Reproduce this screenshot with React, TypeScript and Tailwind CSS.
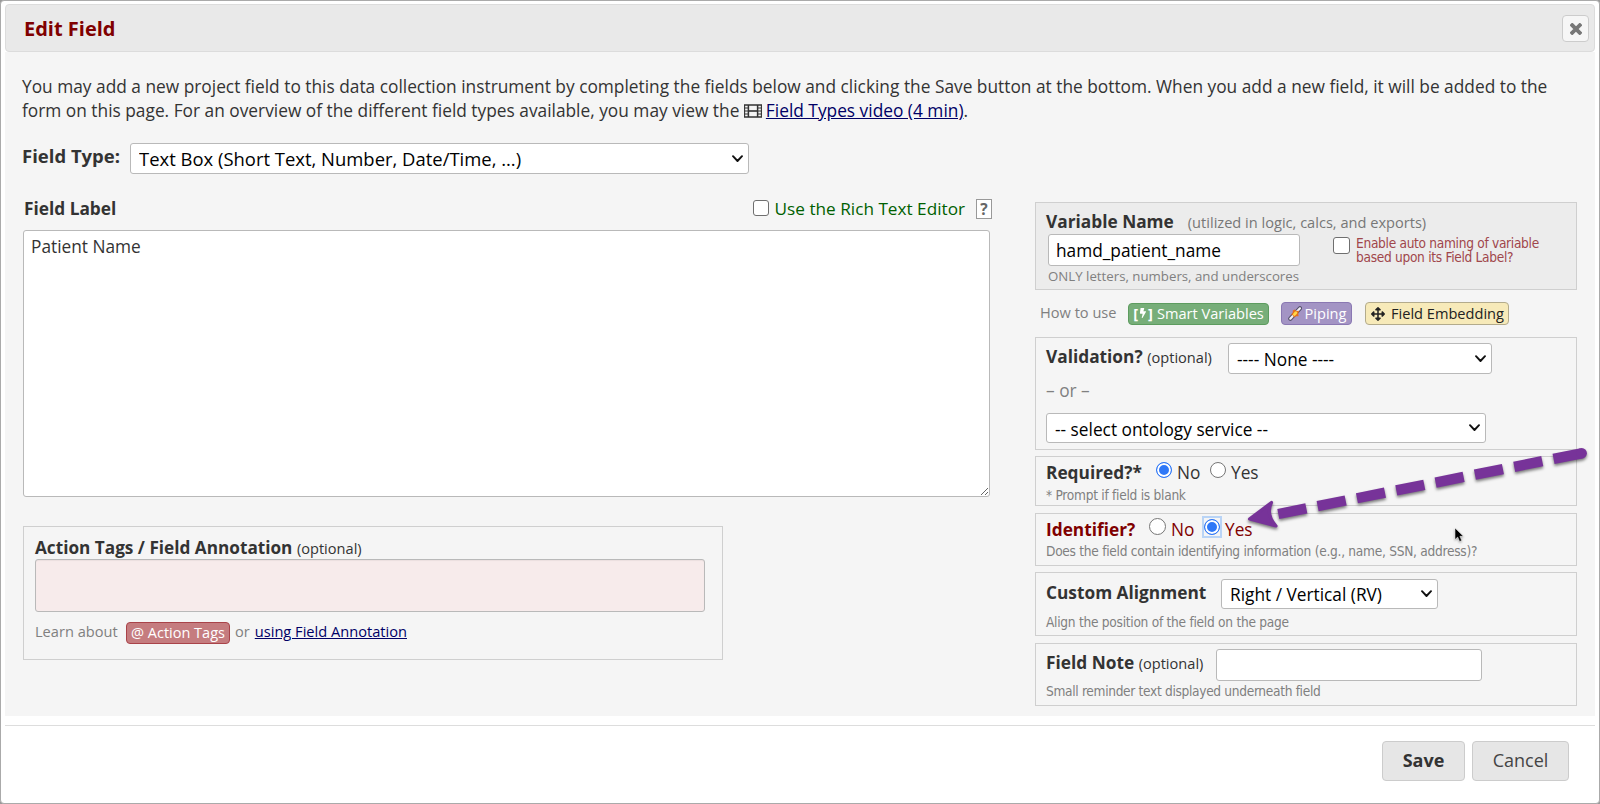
import type { ReactNode } from "react";
import { FaArrowsAlt, FaBolt } from "react-icons/fa";

const control = "border border-[#b9b9b9] rounded-[3px] bg-white text-black outline-none";
const hint = "font-['DejaVu_Sans_Condensed','DejaVu_Sans',sans-serif] text-[13.6px] leading-[14px] tracking-[-0.27px] text-[#808080] whitespace-nowrap";

function Select({ value, className, textClass = "text-[17.3px] pt-[2px]" }: { value: string; className: string; textClass?: string }) {
  return (
    <div className={`relative shrink-0 ${className}`}>
      <select className={`${control} ${textClass} block h-full w-full appearance-none pl-[8px]`} defaultValue={value}>
        <option>{value}</option>
      </select>
      <svg className="pointer-events-none absolute top-1/2 right-[6px] -mt-[4px]" width="11" height="8" viewBox="0 0 11 8" fill="none">
        <path d="M1 1.2 5.5 6 10 1.2" stroke="#111" strokeWidth="1.9" strokeLinecap="round" strokeLinejoin="round" />
      </svg>
    </div>
  );
}

function Checkbox({ className }: { className: string }) {
  return <input type="checkbox" className={`shrink-0 appearance-none rounded-[3px] border border-[#6f6f6f] bg-white ${className}`} />;
}

function Radio({ name, checked = false, className = "" }: { name: string; checked?: boolean; className?: string }) {
  return (
    <input
      type="radio"
      name={name}
      defaultChecked={checked}
      className={`size-[16px] shrink-0 appearance-none rounded-full border border-[#767676] bg-white checked:border-[1.5px] checked:border-[#2f78f7] checked:bg-[#2f78f7] checked:shadow-[inset_0_0_0_2px_#fff] ${className}`}
    />
  );
}

function Panel({ className, children }: { className: string; children: ReactNode }) {
  return <section className={`w-[542px] border border-[#cfcfcf] pl-[10px] ${className}`}>{children}</section>;
}

function FilmIcon() {
  return (
    <svg className="mr-[4px] inline-block align-[-1px]" width="18" height="14" viewBox="0 0 18 14" fill="none" stroke="#333">
      <path d="M0 1H18M0 13H18" strokeWidth="1.5" />
      <path d="M4.4 1V13M13.6 1V13" strokeWidth="1.5" />
      <path d="M.6 1V13M17.4 1V13" strokeWidth="1.1" />
      <path d="M4.4 7H13.6" strokeWidth="1.6" />
      <path d="M0 4H4M0 7H4M0 10H4M14 4H18M14 7H18M14 10H18" strokeWidth="1" />
    </svg>
  );
}

function PipeIcon() {
  return (
    <svg width="14" height="15" viewBox="0 0 14 15" className="shrink-0">
      <path d="M2.3 12.7 12 2.3" stroke="#55506a" strokeWidth="4.2" strokeLinecap="round" />
      <path d="M2.3 12.7 12 2.3" stroke="#f1f1f4" strokeWidth="2.2" strokeLinecap="round" />
      <path d="M6.8 3.4 8.2 5 11 4.8 10.2 7.8 10.6 10.2 8 10.2 5.8 11.6 5 9.4 3.2 8.4 4.8 6.4 4.8 4.4Z" fill="#e56f1c" />
      <path d="M6.4 8.4 7.9 6.7" stroke="#ffd648" strokeWidth="2.8" strokeLinecap="round" />
    </svg>
  );
}

function Arrow() {
  return (
    <svg className="pointer-events-none absolute top-[440px] left-[1230px] drop-shadow-[0_2px_1.5px_rgba(0,0,0,0.5)]" width="366" height="100" viewBox="1230 440 366 100">
      <path d="M1278.3 514 1581.7 453.3" stroke="#773399" strokeWidth="10.4" strokeDasharray="28.6 11.5" fill="none" />
      <circle cx="1581.7" cy="453.3" r="5.2" fill="#773399" />
      <path d="M1249.5 519 1271.5 502.5Q1265.5 514.5 1276 526Z" fill="#773399" stroke="#773399" strokeWidth="3.2" strokeLinejoin="round" />
    </svg>
  );
}

function Cursor() {
  return (
    <svg className="pointer-events-none absolute top-[527px] left-[1454px] drop-shadow-[0_1px_1px_rgba(0,0,0,0.35)]" width="12" height="17" viewBox="0 0 12 17">
      <path d="M1 1V12.6L3.7 10.1 5.6 14.5 7.7 13.6 5.9 9.3H9.4Z" fill="#000" stroke="#fff" strokeWidth=".5" />
    </svg>
  );
}

export default function App() {
  return (
    <div className="relative h-[804px] w-[1600px] bg-[#999] font-['Open_Sans','Noto_Sans',sans-serif] text-[17.3px] leading-[24px] text-[#333]">
      <div className="flex h-full flex-col rounded-[4px] border border-[#aaa] bg-white px-[4px] pt-[3px]">
        <header className="flex h-[48px] shrink-0 items-start justify-between rounded-[4px] border border-[#dcdcdc] bg-[#e9e9e9] pr-[5px] pl-[18px]">
          <h1 className="mt-[11px] text-[20px] leading-[26px] font-bold text-[#800000]">Edit Field</h1>
          <button className="mt-[10px] flex h-[27px] w-[27px] items-center justify-center rounded-[4px] border border-[#ccc] bg-[#f6f6f6] pt-px pl-px">
            <svg width="12" height="12" viewBox="0 0 12 12">
              <path d="M2.2 2.2 9.8 9.8M9.8 2.2 2.2 9.8" stroke="#777" strokeWidth="3.8" strokeLinecap="square" />
            </svg>
          </button>
        </header>

        <main className="h-[664px] shrink-0 bg-[#f5f5f5] px-[17px] pt-[22px]">
          <p className="text-[17.32px] whitespace-nowrap">
            You may add a new project field to this data collection instrument by completing the fields below and clicking the Save button at the bottom. When you add a new field, it will be added to the
            <br />
            form on this page. For an overview of the different field types available, you may view the <FilmIcon />
            <a className="text-[#000066] underline">Field Types video (4 min)</a>.
          </p>

          <div className="mt-[21px] flex h-[31px] items-start">
            <label className="mt-[1px] w-[108px] text-[18.5px] font-bold">Field Type:</label>
            <Select value="Text Box (Short Text, Number, Date/Time, ...)" className="h-[31px] w-[619px]" textClass="text-[18.45px]" />
          </div>

          <div className="flex items-start gap-[45px]">
            <div className="w-[968px] shrink-0 pt-[22px] pl-px">
              <div className="mr-[-2px] flex h-[34px] items-start">
                <label className="mt-px ml-px font-bold">Field Label</label>
                <Checkbox className="mt-[4px] ml-auto size-[16px]" />
                <span className="mt-px ml-[6px] text-[17.2px] text-[#006000]">Use the Rich Text Editor</span>
                <button className="mt-[3px] ml-[11px] flex h-[20px] w-[16px] items-center justify-center border border-[#999] bg-white text-[15.5px] leading-[18px] font-bold text-[#666]">?</button>
              </div>
              <textarea className="block h-[267px] w-[967px] rounded-[3px] border border-[#b9b9b9] bg-white px-[7px] pt-[4px] leading-[24px] outline-none" defaultValue="Patient Name" />

              <section className="mt-[29px] h-[134px] w-[700px] border border-[#cfcfcf] pl-[11px]">
                <div className="flex h-[32px] items-end whitespace-nowrap">
                  <p className="-mb-px text-[17.2px]">
                    <b>Action Tags / Field Annotation</b> <span className="text-[14.6px]">(optional)</span>
                  </p>
                </div>
                <textarea className="block h-[53px] w-[670px] resize-none rounded-[3px] border border-[#b9b9b9] bg-[#f7ebeb] shadow-[inset_0_1px_1px_rgba(0,0,0,0.05)] outline-none" />
                <div className="mt-[10px] flex h-[24px] items-start text-[14.6px] text-[#808080]">
                  <span className="mt-[-3px] w-[91px]">Learn about</span>
                  <button className="h-[22px] w-[104px] rounded-[4px] border border-[#a94349] bg-[#c57c7f] text-[14.5px] leading-[18px] whitespace-nowrap text-white">@ Action Tags</button>
                  <span className="mt-[-3px] ml-[5px]">or</span>
                  <a className="mt-[-3px] ml-[5px] text-[14.63px] text-[#000066] underline">using Field Annotation</a>
                </div>
              </section>
            </div>

            <div className="pt-[28px]">
              <Panel className="h-[88px] bg-[#ececec]">
                <div className="flex h-[31px] items-baseline pt-[7px]">
                  <b>Variable Name</b>
                  <span className="ml-[14px] text-[14.6px] text-[#777]">(utilized in logic, calcs, and exports)</span>
                </div>
                <div className="flex items-start">
                  <input className={`${control} ml-[2px] h-[32px] w-[252px] px-[7px]`} defaultValue="hamd_patient_name" />
                  <Checkbox className="mt-[3px] ml-[33px] h-[17px] w-[17px]" />
                  <p className="mt-[2px] ml-[6px] font-['DejaVu_Sans_Condensed','DejaVu_Sans',sans-serif] text-[13.6px] leading-[14px] tracking-[-0.3px] whitespace-nowrap text-[#a0464b]">
                    Enable auto naming of variable
                    <br />
                    based upon its Field Label?
                  </p>
                </div>
                <p className="mt-[1px] ml-[2px] text-[13.25px] leading-[18px] text-[#808080]">ONLY letters, numbers, and underscores</p>
              </Panel>

              <div className="flex h-[47px] items-start pt-[12px] pl-[5px] text-[14.6px] leading-[21px] whitespace-nowrap">
                <span className="w-[88px] text-[#808080]">How to use</span>
                <button className="mt-[1px] flex h-[22px] w-[141px] items-center justify-center rounded-[4px] border border-[#5d9c5f] bg-[#77ae79] pb-[2px] text-white">
                  <b>[</b>
                  <FaBolt className="size-[10px]" />
                  <b>]</b>
                  <span className="ml-[4px]">Smart Variables</span>
                </button>
                <button className="ml-[12px] flex h-[23px] w-[71px] items-center justify-center gap-[3px] rounded-[4px] border border-[#8a78b2] bg-[#a394c4] pb-[1px] pl-[1px] text-white">
                  <PipeIcon />
                  Piping
                </button>
                <button className="ml-[13px] flex h-[23px] w-[144px] items-center justify-center gap-[6px] rounded-[4px] border border-[#b3ab8c] bg-[#f7eab9] pl-px text-[#222]">
                  <FaArrowsAlt className="size-[14px]" />
                  Field Embedding
                </button>
              </div>

              <Panel className="h-[113px]">
                <div className="flex items-start">
                  <p className="mt-[7px] w-[182px] whitespace-nowrap">
                    <b>Validation?</b> <span className="text-[14.6px]">(optional)</span>
                  </p>
                  <Select value="---- None ----" className="mt-[5px] h-[31px] w-[264px]" />
                </div>
                <p className="mt-[5px] text-[#808080]">– or –</p>
                <Select value="-- select ontology service --" className="mt-[10px] h-[30px] w-[440px]" textClass="text-[17.3px] pt-[3px]" />
              </Panel>

              <Panel className="mt-[6px] h-[50px]">
                <div className="flex h-[34px] items-start pt-[4px]">
                  <b className="w-[110px]">Required?*</b>
                  <Radio name="required" checked className="mt-[1px]" />
                  <span className="ml-[5px] w-[33px]">No</span>
                  <Radio name="required" className="mt-[1px]" />
                  <span className="ml-[5px]">Yes</span>
                </div>
                <p className={`${hint} mt-[-3px]`}>* Prompt if field is blank</p>
              </Panel>

              <Panel className="mt-[7px] h-[53px]">
                <div className="flex h-[32px] items-start pt-[4px] text-[#800000]">
                  <b className="w-[103px]">Identifier?</b>
                  <Radio name="identifier" className="size-[17px]" />
                  <span className="ml-[5px] w-[31px]">No</span>
                  <span className="mt-[-2px] flex h-[22px] w-[20px] items-center justify-center border-2 border-[#b9d4f6]">
                    <Radio name="identifier" checked />
                  </span>
                  <span className="ml-[3px]">Yes</span>
                </div>
                <p className={`${hint} mt-[-2px]`}>Does the field contain identifying information (e.g., name, SSN, address)?</p>
              </Panel>

              <Panel className="mt-[6px] h-[64px]">
                <div className="flex h-[42px] items-start">
                  <b className="mt-[8px] w-[175px]">Custom Alignment</b>
                  <Select value="Right / Vertical (RV)" className="mt-[6px] h-[30px] w-[217px]" />
                </div>
                <p className={hint}>Align the position of the field on the page</p>
              </Panel>

              <Panel className="mt-[7px] h-[63px]">
                <div className="flex h-[40px] items-start">
                  <p className="mt-[7px] w-[170px] whitespace-nowrap">
                    <b>Field Note</b> <span className="text-[14.6px]">(optional)</span>
                  </p>
                  <input className={`${control} mt-[5px] h-[32px] w-[266px]`} />
                </div>
                <p className={`${hint} tracking-[-0.32px]`}>Small reminder text displayed underneath field</p>
              </Panel>
            </div>
          </div>
        </main>

        <footer className="mt-[9px] flex items-start justify-end gap-[7px] border-t border-[#ddd] pt-[15px] pr-[26px] text-[18px] text-[#444]">
          <button className="h-[40px] w-[83px] rounded-[4px] border border-[#ccc] bg-[#e6e6e6] pb-[2px] font-bold text-[#333]">Save</button>
          <button className="h-[40px] w-[97px] rounded-[4px] border border-[#ccc] bg-[#e6e6e6] pb-[2px]">Cancel</button>
        </footer>
      </div>
      <Arrow />
      <Cursor />
    </div>
  );
}
